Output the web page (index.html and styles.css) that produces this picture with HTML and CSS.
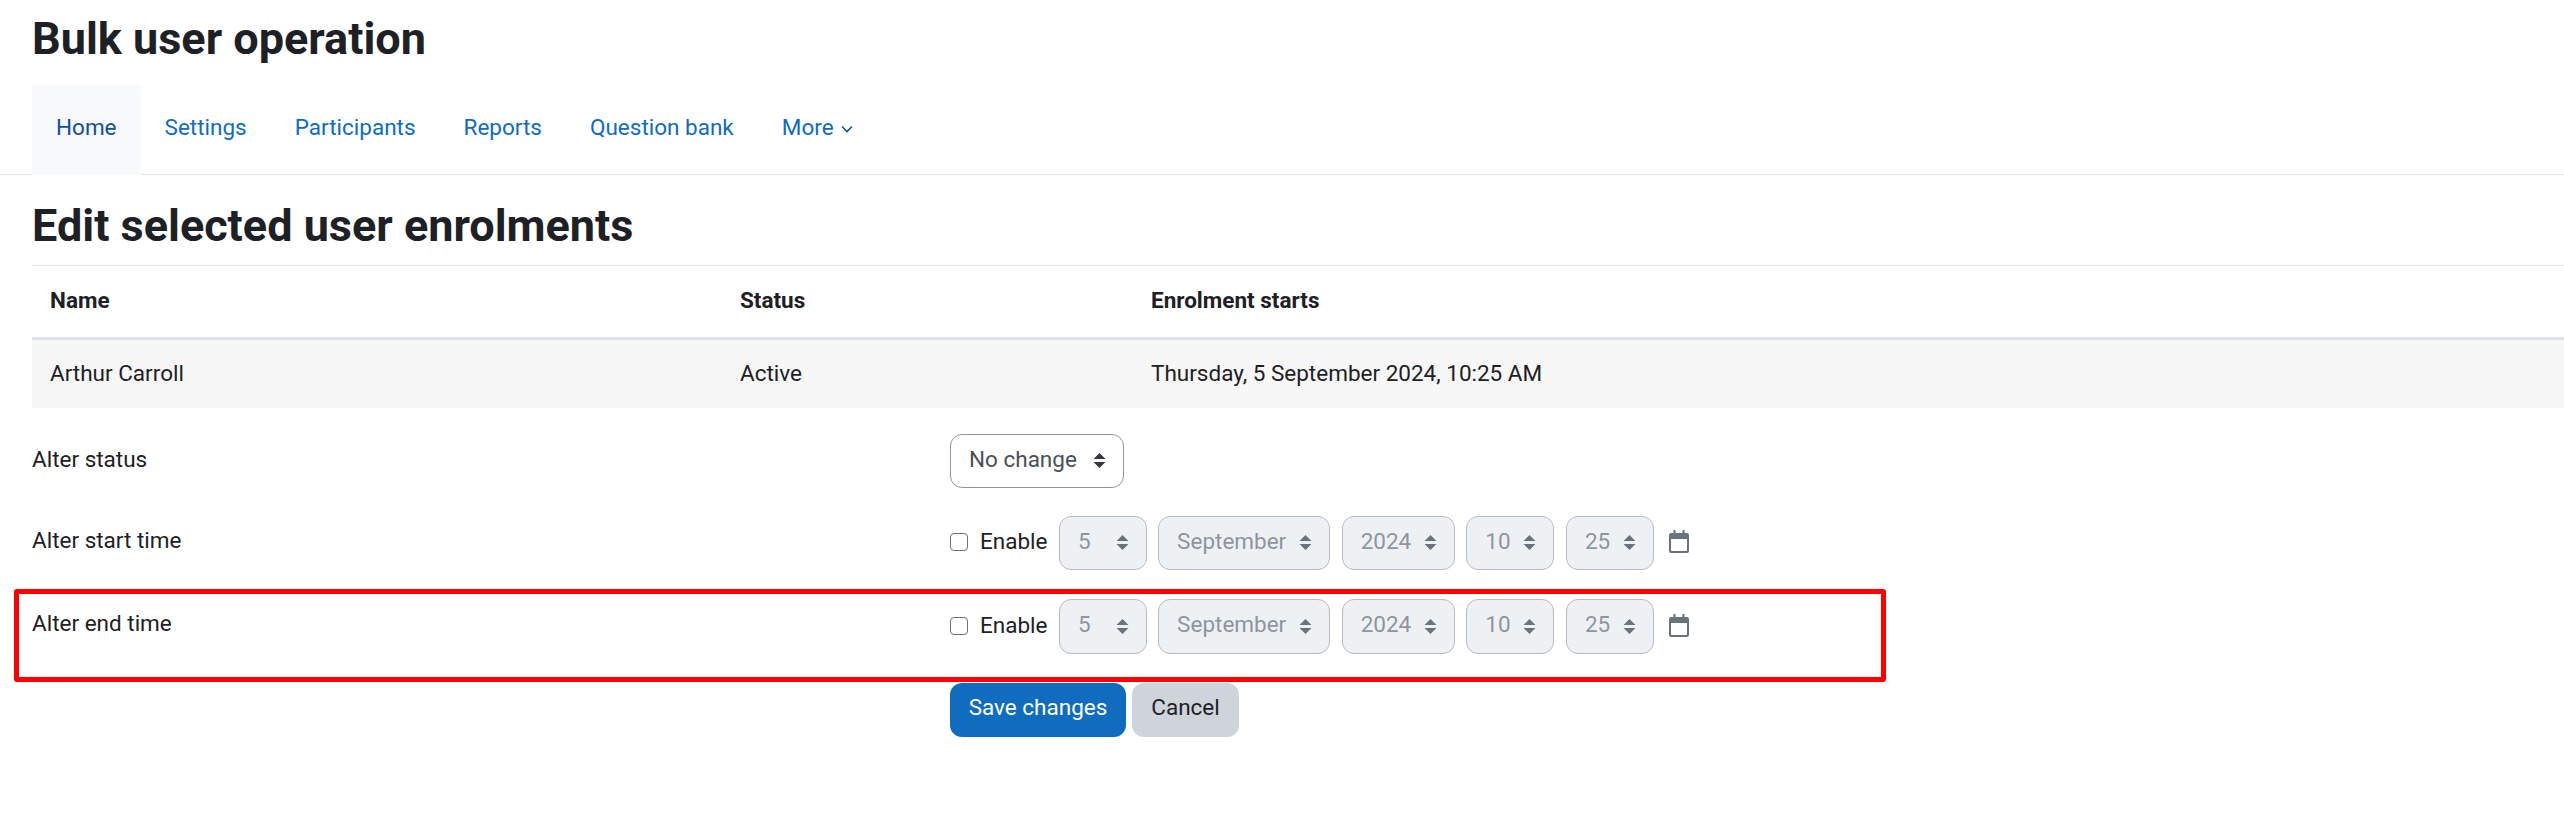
FILE: index.html
```html
<!DOCTYPE html>
<html lang="en">
<head>
<meta charset="utf-8">
<title>Bulk user operation</title>
<link rel="stylesheet" href="styles.css">
</head>
<body>
<svg class="defs" width="0" height="0" aria-hidden="true">
  <symbol id="updown" viewBox="0 0 13 15"><path d="M6.500 0 12.500 6H.500zM.500 9h12l-6 6z"/></symbol>
  <symbol id="cal" viewBox="0 0 20 23"><path fill-rule="evenodd" d="M4.500 0h2v3h7V0h2v3H18a2 2 0 0 1 2 2V21a2 2 0 0 1-2 2H2a2 2 0 0 1-2-2V5a2 2 0 0 1 2-2h2.500zM2 9V20.300c0 .4.3.7.7.7h14.600c.4 0 .7-.3.7-.7V9z"/></symbol>
</svg>
<header class="page-title"><h1>Bulk user operation</h1></header>
<nav class="tabs">
  <a class="tab active" href="#">Home</a>
  <a class="tab" href="#">Settings</a>
  <a class="tab" href="#">Participants</a>
  <a class="tab" href="#">Reports</a>
  <a class="tab" href="#">Question bank</a>
  <a class="tab" href="#">More<svg class="chev" viewBox="0 0 12 8"><path d="M1 1.500 6 6.500l5-5"/></svg></a>
</nav>
<section class="section-title"><h2>Edit selected user enrolments</h2></section>
<table class="users">
  <thead>
    <tr><th class="col-name">Name</th><th class="col-status">Status</th><th>Enrolment starts</th></tr>
  </thead>
  <tbody>
    <tr><td>Arthur Carroll</td><td>Active</td><td>Thursday, 5 September 2024, 10:25 AM</td></tr>
  </tbody>
</table>
<form class="form">
  <div class="row row-status">
    <div class="label">Alter status</div>
    <div class="select enabled w-nochange"><span>No change</span><svg class="arrows"><use href="#updown"/></svg></div>
  </div>
  <div class="row">
    <div class="label">Alter start time</div>
    <div class="controls">
      <label class="check"><span class="box"></span>Enable</label>
      <div class="select w-day"><span>5</span><svg class="arrows"><use href="#updown"/></svg></div>
      <div class="select w-month"><span>September</span><svg class="arrows"><use href="#updown"/></svg></div>
      <div class="select w-year"><span>2024</span><svg class="arrows"><use href="#updown"/></svg></div>
      <div class="select w-hour"><span>10</span><svg class="arrows"><use href="#updown"/></svg></div>
      <div class="select w-hour"><span>25</span><svg class="arrows"><use href="#updown"/></svg></div>
      <svg class="cal"><use href="#cal"/></svg>
    </div>
  </div>
  <div class="row">
    <div class="label">Alter end time</div>
    <div class="controls">
      <label class="check"><span class="box"></span>Enable</label>
      <div class="select w-day"><span>5</span><svg class="arrows"><use href="#updown"/></svg></div>
      <div class="select w-month"><span>September</span><svg class="arrows"><use href="#updown"/></svg></div>
      <div class="select w-year"><span>2024</span><svg class="arrows"><use href="#updown"/></svg></div>
      <div class="select w-hour"><span>10</span><svg class="arrows"><use href="#updown"/></svg></div>
      <div class="select w-hour"><span>25</span><svg class="arrows"><use href="#updown"/></svg></div>
      <svg class="cal"><use href="#cal"/></svg>
    </div>
  </div>
  <div class="row">
    <div class="label"></div>
    <div class="buttons">
      <button class="btn primary" type="button">Save changes</button>
      <button class="btn secondary" type="button">Cancel</button>
    </div>
  </div>
</form>
<div class="highlight"></div>
</body>
</html>
```
FILE: styles.css
```css
* { box-sizing: border-box; }
html, body { margin: 0; padding: 0; }
body {
  position: relative;
  height: 822px;
  overflow: hidden;
  background: #fff;
  color: #1d2125;
  font-family: Roboto, "Liberation Sans", sans-serif;
  font-size: 22.5px;
  line-height: 33.75px;
}
.defs { position: absolute; }
.page-title { height: 85px; padding: 12px 0 0 32px; }
h1, h2 { margin: 0; font-size: 45px; line-height: 54px; font-weight: 700; }
.tabs {
  display: flex;
  height: 90px;
  padding-left: 32px;
  border-bottom: 1.5px solid #dee2e6;
}
.tab {
  display: flex;
  align-items: center;
  height: 90px;
  padding: 0 24px 4px;
  color: #0f6cbf;
  text-decoration: none;
}
.tab.active { background: #f8f9fa; color: #115293; }
.chev {
  width: 12px;
  height: 8px;
  margin-left: 7px;
  margin-top: 2px;
  fill: none;
  stroke: #115293;
  stroke-width: 1.6;
}
.section-title { height: 90px; padding: 24px 0 0 32px; }
.users {
  width: calc(100% - 32px);
  margin-left: 32px;
  border-collapse: collapse;
  table-layout: fixed;
}
.users th, .users td { padding: 0 18px; text-align: left; }
.users th { height: 72.5px; font-weight: 700; border-top: 1.5px solid #dee2e6; border-bottom: 3px solid #dee2e6; }
.users td { height: 70px; background: #f7f7f7; }
.col-name { width: 690px; }
.col-status { width: 411px; }
.form { display: flex; flex-direction: column; gap: 29px; padding: 25.5px 0 0 32px; }
.row { display: flex; }
.row-status { margin-bottom: -1.5px; }
.label { width: 918px; padding-top: 8px; }
.row-status .label { padding-top: 9px; }
.controls { display: flex; align-items: center; }
.check { display: flex; align-items: center; width: 109px; padding-bottom: 1.5px; }
.box {
  width: 18px;
  height: 18px;
  margin-right: 12px;
  border: 1.5px solid #6a737b;
  border-radius: 4px;
  background: #fff;
}
.select {
  display: flex;
  align-items: center;
  justify-content: space-between;
  height: 54.5px;
  margin-right: 11.6px;
  padding: 0 17px 2px 18px;
  border: 1.5px solid #b8bcc2;
  border-radius: 12px;
  background: #eef1f4;
  color: #8f959e;
  fill: #6a737b;
}
.select.enabled { background: #fff; border-color: #8f959e; color: #495057; fill: #343a40; margin-right: 0; }
.arrows { width: 13px; height: 15px; flex: none; margin-top: 2px; }
.w-nochange { width: 174px; }
.w-day { width: 87.5px; }
.w-month { width: 172px; }
.w-year { width: 113px; }
.w-hour { width: 88px; }
.cal { width: 20px; height: 23px; margin: 0 0 2px 4px; fill: #6a737b; }
.buttons { display: flex; gap: 6px; }
.btn {
  height: 54px;
  padding: 0 18px 3px;
  border: 0;
  border-radius: 12px;
  font: inherit;
}
.primary { width: 176px; background: #0f6cbf; color: #fff; }
.secondary { width: 107px; background: #ced4da; color: #1d2125; }
.highlight {
  position: absolute;
  left: 14px;
  top: 589px;
  width: 1872px;
  height: 93px;
  border: 5px solid #f00;
  border-radius: 3px;
  pointer-events: none;
}
```
